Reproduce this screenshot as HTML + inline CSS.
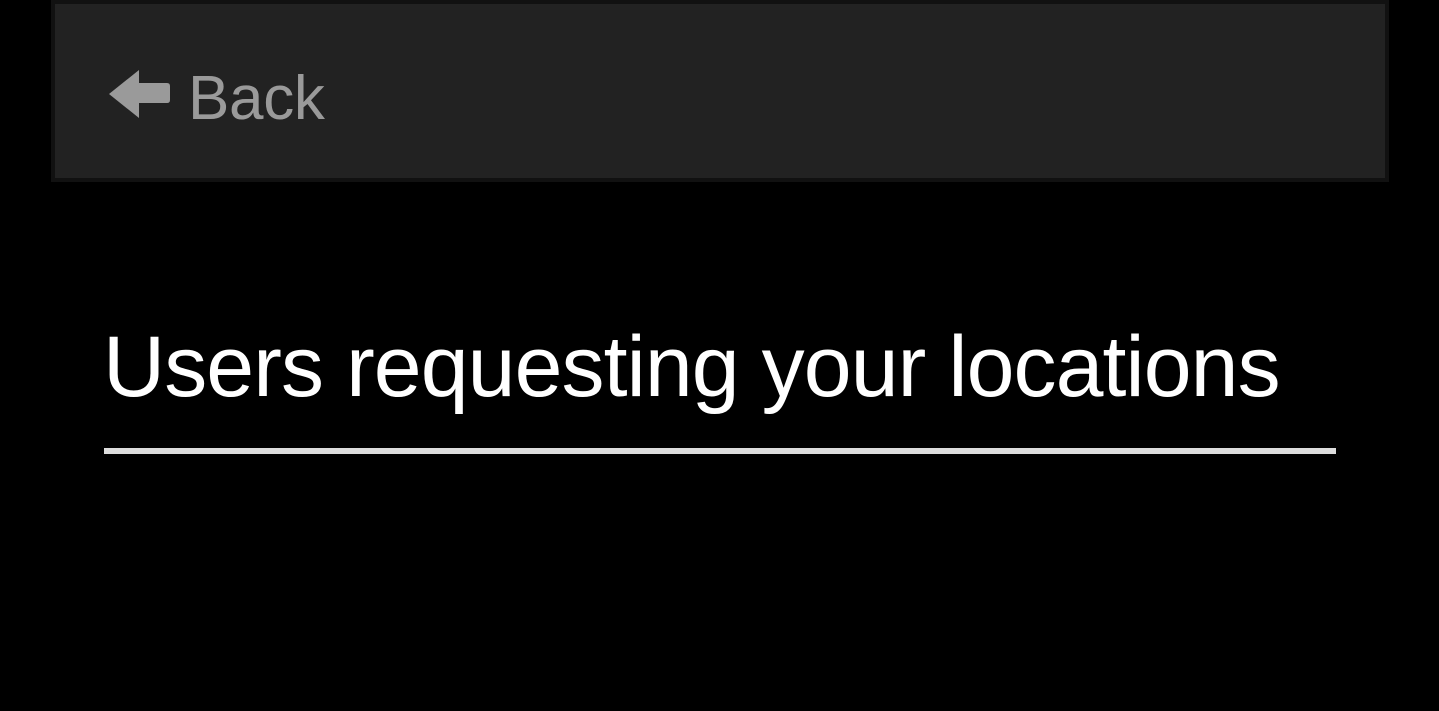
<!DOCTYPE html>
<html><head><style>
html,body{margin:0;padding:0;background:#000;width:1439px;height:711px;overflow:hidden;font-family:"Liberation Sans",sans-serif}
.bar{position:absolute;left:51px;top:0;width:1330px;height:174px;background:#222;border:4px solid #111}
.back{position:absolute;left:188px;top:59px;font-size:62px;color:#9a9a9a;line-height:80px;letter-spacing:-0.3px}
.title{position:absolute;left:103px;top:317px;font-size:86px;color:#fff;line-height:100px;white-space:nowrap;letter-spacing:-0.9px}
.line{position:absolute;left:104px;top:448px;width:1232px;height:6px;background:#ddd}
</style></head><body>
<div class="bar"></div>
<svg style="position:absolute;left:0;top:0" width="300" height="180">
<path d="M109 94 L139 70 L139 83 L167 83 Q170 83 170 86 L170 100 Q170 103 167 103 L139 103 L139 118 Z" fill="#9a9a9a"/>
</svg>
<div class="back">Back</div>
<div class="title">Users requesting your locations</div>
<div class="line"></div>
</body></html>
